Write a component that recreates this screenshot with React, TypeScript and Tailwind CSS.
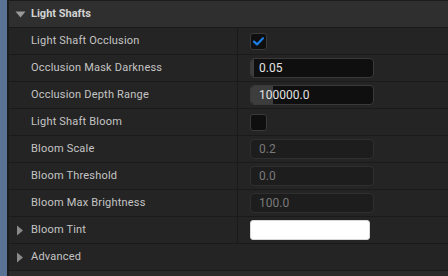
import React from "react";

const font = { fontFamily: "Roboto, 'Noto Sans', Arial, sans-serif" };

function Row({ label, children, arrow }: { label: string; children?: React.ReactNode; arrow?: boolean }) {
  return (
    <div className="h-[27px] flex border-b border-[#1a1a1a] bg-[#242424]">
      <div className="w-[229px] flex items-center border-r border-[#1a1a1a] relative">
        {arrow && (
          <svg className="absolute left-[7px] top-[8px]" width="8" height="11" viewBox="0 0 8 11">
            <path d="M1 0.5 L7 5.5 L1 10.5 Z" fill="#8a8a8a" />
          </svg>
        )}
        <span className="pl-[22px] text-[11px] text-[#c4c4c4] tracking-[0.2px]">{label}</span>
      </div>
      <div className="flex-1 flex items-center pl-[12px]">{children}</div>
    </div>
  );
}

function NumInput({ value, fill, disabled }: { value: string; fill?: number; disabled?: boolean }) {
  if (disabled) {
    return (
      <div className="w-[124px] h-[20px] rounded-[4px] border border-[#2f2f2f] bg-[#1d1d1d] flex items-center pl-[8px] text-[12px] text-[#7a7a7a]">
        {value}
      </div>
    );
  }
  return (
    <div className="w-[124px] h-[20px] rounded-[4px] border border-[#3a3a3a] bg-[#0f0f0f] relative flex items-center overflow-hidden">
      {fill !== undefined && (
        <div className="absolute left-0 top-0 bottom-0 bg-[#3d3d3d] rounded-l-[3px]" style={{ width: fill }} />
      )}
      <span className="relative pl-[8px] text-[12px] text-[#e2e2e2]">{value}</span>
    </div>
  );
}

export default function App() {
  return (
    <div className="w-[448px] h-[276px] flex bg-[#1a1a1a] overflow-hidden" style={font}>
      <div className="w-[7px] bg-[#5a7294]" />
      <div className="w-[2px] bg-[#1c1c1c]" />
      <div className="flex-1 flex flex-col">
        <div className="h-[28px] shrink-0 flex items-center border-b border-[#1a1a1a] border-t border-t-[#1c1c1c] bg-[#2f2f2f] relative">
          <svg className="absolute left-[6px] top-[10px]" width="11" height="7" viewBox="0 0 11 7">
            <path d="M0.5 0.5 L10.5 0.5 L5.5 6.5 Z" fill="#9a9a9a" />
          </svg>
          <span className="pl-[22px] text-[11px] font-bold text-[#d2d2d2]">Light Shafts</span>
        </div>
        <Row label="Light Shaft Occlusion">
          <div className="w-[17px] h-[17px] rounded-[3px] border border-[#3a3a3a] bg-[#0f0f0f] flex items-center justify-center">
            <svg width="11" height="9" viewBox="0 0 11 9">
              <path d="M1 4.6 L4 7.4 L10 1.3" stroke="#1d7fe6" strokeWidth="2.2" fill="none" strokeLinecap="round" strokeLinejoin="round" />
            </svg>
          </div>
        </Row>
        <Row label="Occlusion Mask Darkness">
          <NumInput value="0.05" fill={3} />
        </Row>
        <Row label="Occlusion Depth Range">
          <NumInput value="100000.0" fill={22} />
        </Row>
        <Row label="Light Shaft Bloom">
          <div className="w-[17px] h-[17px] rounded-[3px] border border-[#3a3a3a] bg-[#0f0f0f]" />
        </Row>
        <Row label="Bloom Scale">
          <NumInput value="0.2" disabled />
        </Row>
        <Row label="Bloom Threshold">
          <NumInput value="0.0" disabled />
        </Row>
        <Row label="Bloom Max Brightness">
          <NumInput value="100.0" disabled />
        </Row>
        <Row label="Bloom Tint" arrow>
          <div className="w-[120px] h-[20px] rounded-[3px] bg-white border border-[#d8d8d8]" />
        </Row>
        <div className="h-[27px] shrink-0 flex items-center border-b border-[#1a1a1a] bg-[#242424] relative">
          <svg className="absolute left-[7px] top-[8px]" width="8" height="11" viewBox="0 0 8 11">
            <path d="M1 0.5 L7 5.5 L1 10.5 Z" fill="#8a8a8a" />
          </svg>
          <span className="pl-[22px] text-[11px] text-[#c4c4c4] tracking-[0.2px]">Advanced</span>
        </div>
        <div className="flex-1 bg-[#2a2a2a]" />
      </div>
    </div>
  );
}
